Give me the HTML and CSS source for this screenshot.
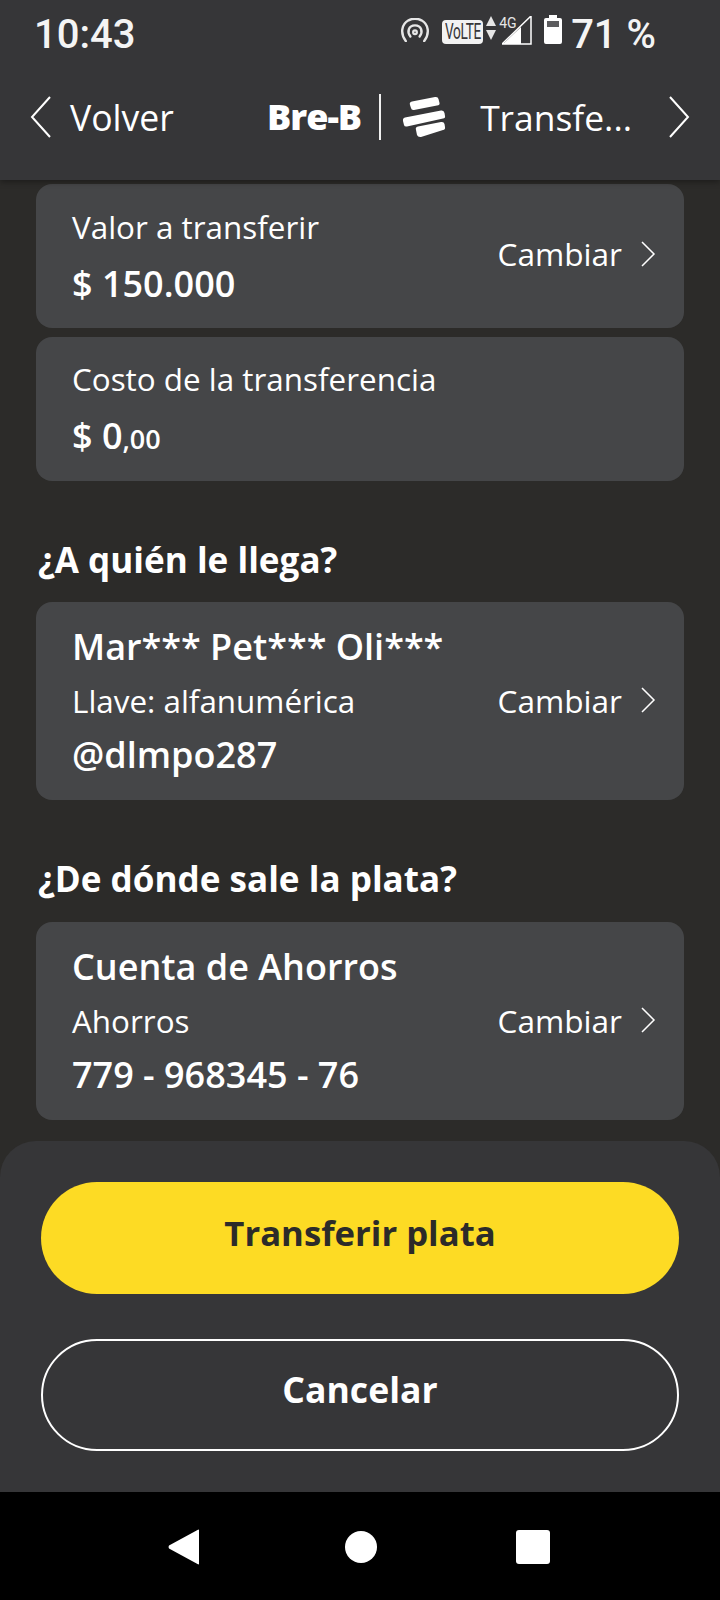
FILE: index.html
```html
<!DOCTYPE html>
<html lang="es">
<head>
    <meta charset="UTF-8">
    <meta name="viewport" content="width=device-width, initial-scale=1.0">
    <title>Transferir plata</title>
    <link rel="stylesheet" href="styles.css">
</head>
<body>
<div class="screen">

    <header class="top">
        <div class="status-bar">
            <span class="clock">10:43</span>
            <div class="status-icons">
                <svg class="hotspot" width="30" height="24" viewBox="0 0 30 26" fill="none" stroke="#e6e6e6" stroke-linecap="round">
                    <path d="M5 25C-1 17 0 7 8 2.500C12 .5 18 .5 22 2.500C30 7 31 17 25 25" stroke-width="2.600"/>
                    <path d="M10 20C6 15 8 8 15 8C22 8 24 15 20 20" stroke-width="2.600"/>
                    <circle cx="15" cy="15.500" r="2" stroke-width="2.400"/>
                </svg>
                <span class="volte"><span class="volte-text">VoLTE</span></span>
                <svg class="arrows" width="10" height="24" viewBox="0 0 10 24" fill="#e6e6e6">
                    <path d="M5 0L10 10H0Z"/>
                    <path d="M0 14H10L5 24Z"/>
                </svg>
                <div class="signal">
                    <span class="net">4G</span>
                    <svg width="30" height="29" viewBox="0 0 30 29">
                        <path d="M29 0V28H0Z" fill="none" stroke="#fff" stroke-width="1.500"/>
                        <path d="M19 11V28H1L19 11Z" fill="#fff"/>
                    </svg>
                </div>
                <svg class="battery" width="18" height="29" viewBox="0 0 18 29">
                    <path d="M5 0H13V3H16Q18 3 18 5V27Q18 29 16 29H2Q0 29 0 27V5Q0 3 2 3H5Z" fill="#fff"/>
                    <rect x="3" y="6" width="12" height="6" fill="#5c5c5e"/>
                </svg>
                <span class="percent">71 %</span>
            </div>
        </div>

        <nav class="nav-bar">
            <div class="back">
                <svg class="chev-lg" width="22" height="42" viewBox="0 0 22 42" fill="none" stroke="#fff" stroke-width="2">
                    <path d="M20 1L2 21L20 41"/>
                </svg>
                <span>Volver</span>
            </div>
            <div class="brand">
                <span class="bre-b">Bre-B</span>
                <span class="divider"></span>
                <svg class="bank-logo" width="44" height="42" viewBox="0 0 44 42" fill="#fff">
                    <path d="M8 9Q7 6 10 5.500L33 1Q36 .500 36.500 3L37.500 7Q38 9 35 9.500L12 14Q9.500 14.500 9 12Z"/>
                    <path d="M1 25Q.500 22 3 21.500L39 14.500Q42 14 42.500 17L43 20Q43.500 22 41 22.500L5 30.500Q2.500 31 2 29Z"/>
                    <path d="M14 34Q13 31 16 30.500L39 26Q42 25.500 42.500 28L43 31Q43.500 33.500 41 34L19 41Q16 41.500 15 39Z"/>
                </svg>
                <span class="nav-title">Transfe...</span>
                <svg class="chev-lg" width="22" height="42" viewBox="0 0 22 42" fill="none" stroke="#fff" stroke-width="2">
                    <path d="M2 1L20 21L2 41"/>
                </svg>
            </div>
        </nav>
    </header>

    <main class="content">
        <section class="card card-row">
            <div class="card-info">
                <div class="label">Valor a transferir</div>
                <div class="amount">$ 150.000</div>
            </div>
            <div class="change">
                <span>Cambiar</span>
                <svg width="16" height="26" viewBox="0 0 16 26" fill="none" stroke="#fff" stroke-width="1.500"><path d="M2 1L14 13L2 25"/></svg>
            </div>
        </section>

        <section class="card card-row">
            <div class="card-info">
                <div class="label">Costo de la transferencia</div>
                <div class="amount">$ 0<small>,00</small></div>
            </div>
        </section>

        <h3 class="section-title">¿A quién le llega?</h3>
        <section class="card card-row tall">
            <div class="card-info">
                <div class="name">Mar*** Pet*** Oli***</div>
                <div class="label">Llave: alfanumérica</div>
                <div class="name">@dlmpo287</div>
            </div>
            <div class="change">
                <span>Cambiar</span>
                <svg width="16" height="26" viewBox="0 0 16 26" fill="none" stroke="#fff" stroke-width="1.500"><path d="M2 1L14 13L2 25"/></svg>
            </div>
        </section>

        <h3 class="section-title">¿De dónde sale la plata?</h3>
        <section class="card card-row tall">
            <div class="card-info">
                <div class="name">Cuenta de Ahorros</div>
                <div class="label">Ahorros</div>
                <div class="name">779 - 968345 - 76</div>
            </div>
            <div class="change">
                <span>Cambiar</span>
                <svg width="16" height="26" viewBox="0 0 16 26" fill="none" stroke="#fff" stroke-width="1.500"><path d="M2 1L14 13L2 25"/></svg>
            </div>
        </section>
    </main>

    <footer class="actions">
        <button class="btn btn-primary">Transferir plata</button>
        <button class="btn btn-outline">Cancelar</button>
    </footer>

    <div class="system-nav">
        <svg class="nav-back" width="32" height="36" viewBox="0 0 32 36" fill="#fff"><path d="M31 1.500V34.500Q31 36 29.500 35L1 19.500Q0 18 1 16.500L29.500 1Q31 0 31 1.500Z"/></svg>
        <svg class="nav-home" width="32" height="32" viewBox="0 0 32 32" fill="#fff"><circle cx="16" cy="16" r="16"/></svg>
        <svg width="34" height="34" viewBox="0 0 34 34" fill="#fff"><rect width="34" height="34" rx="3"/></svg>
    </div>

</div>
</body>
</html>
```

FILE: styles.css
```css
:root {
    --bg-color: #2c2b29;
    --bar-color: #363638;
    --card-color: #454648;
    --yellow: #fddb24;
    --text-color: #ffffff;
}

* {
    box-sizing: border-box;
}

body {
    margin: 0;
    background: var(--bg-color);
    color: var(--text-color);
    font-family: "Open Sans", sans-serif;
}

.screen {
    width: 720px;
    height: 1600px;
    display: flex;
    flex-direction: column;
    overflow: hidden;
}

.top {
    height: 180px;
    flex-shrink: 0;
    background: var(--bar-color);
    box-shadow: 0 2px 6px rgba(0, 0, 0, 0.35);
    position: relative;
    z-index: 1;
}

/* status bar */
.status-bar {
    height: 68px;
    padding: 0 64px 0 34px;
    display: flex;
    justify-content: space-between;
    align-items: center;
    font-family: Roboto, sans-serif;
}

.clock {
    font-size: 40px;
    font-weight: 500;
    color: #f4f4f4;
}

.status-icons {
    display: flex;
    align-items: center;
}

.hotspot {
    margin: 0 12px 9px 0;
}

.volte {
    width: 41px;
    height: 24px;
    margin-bottom: 5px;
    background: #f2f2f2;
    border-radius: 4px;
    color: #363638;
    display: flex;
    justify-content: center;
    align-items: center;
    overflow: hidden;
}

.volte-text {
    font-size: 22px;
    transform: scaleX(0.62);
    letter-spacing: -0.5px;
}

.arrows {
    margin: 0 6px 12px 3px;
}

.signal {
    display: flex;
    position: relative;
    width: 30px;
    height: 29px;
    margin-bottom: 8px;
    align-items: flex-end;
}

.net {
    position: absolute;
    left: -3px;
    top: -1px;
    font-size: 14px;
    color: #e6e6e6;
}

.battery {
    margin: 0 9px 9px 12px;
}

.percent {
    font-size: 40px;
    font-weight: 500;
    color: #f4f4f4;
    white-space: nowrap;
}

/* nav bar */
.nav-bar {
    height: 98px;
    padding: 0 30px;
    display: flex;
    justify-content: space-between;
    align-items: center;
    font-size: 35.4px;
}

.back,
.brand {
    display: flex;
    align-items: center;
}

.back span {
    margin-left: 18px;
    font-size: 35.6px;
}

.bre-b {
    font-size: 36px;
    font-weight: 800;
    letter-spacing: -1px;
    margin-bottom: 2px;
}

.divider {
    width: 2px;
    height: 46px;
    background: #f0f0f0;
    margin: 0 21px 0 18px;
}

.nav-title {
    margin: 0 36px 0 34px;
}

/* scrolling content */
.content {
    height: 961px;
    flex-shrink: 0;
    padding: 4px 36px 0;
    display: flex;
    flex-direction: column;
    gap: 9px;
}

.card {
    background: var(--card-color);
    border-radius: 16px;
    padding: 0 28px 0 36px;
}

.card-row {
    height: 144px;
    flex-shrink: 0;
    display: flex;
    justify-content: space-between;
    align-items: center;
}

.card-row.tall {
    height: 198px;
}

.card-info {
    display: flex;
    flex-direction: column;
    gap: 14px;
}

.label {
    font-size: 31.4px;
    line-height: 42px;
}

.amount {
    font-size: 36px;
    line-height: 44px;
    font-weight: 600;
}

.amount small {
    font-size: 27px;
}

.name {
    font-size: 36px;
    line-height: 46px;
    font-weight: 600;
}

.tall .card-info {
    gap: 10px;
}

.change {
    display: flex;
    align-items: center;
    gap: 18px;
    margin-bottom: 5px;
    font-size: 31.6px;
}

.tall .change {
    margin-bottom: 2px;
}

.section-title {
    margin: 0;
    height: 103px;
    flex-shrink: 0;
    padding: 45px 0 0 2px;
    font-size: 35.1px;
    line-height: 48px;
    font-weight: 700;
}

.section-title + .card + .section-title {
    height: 104px;
}

/* bottom sheet */
.actions {
    height: 351px;
    flex-shrink: 0;
    background: var(--bar-color);
    border-radius: 36px 36px 0 0;
    padding: 41px 41px 0;
    display: flex;
    flex-direction: column;
    gap: 45px;
}

.btn {
    height: 112px;
    padding-bottom: 13px;
    border-radius: 56px;
    font-family: "Open Sans", sans-serif;
    font-size: 35.6px;
    font-weight: 700;
}

.btn-primary {
    background: var(--yellow);
    border: none;
    color: #2c2b29;
    font-size: 34.7px;
}

.btn-outline {
    background: transparent;
    border: 2.5px solid #ffffff;
    color: #ffffff;
}

.system-nav {
    flex: 1;
    background: #000;
    padding: 2px 170px 0 168px;
    display: flex;
    align-items: center;
}

.nav-home {
    margin: 0 139px 0 145px;
}
```
